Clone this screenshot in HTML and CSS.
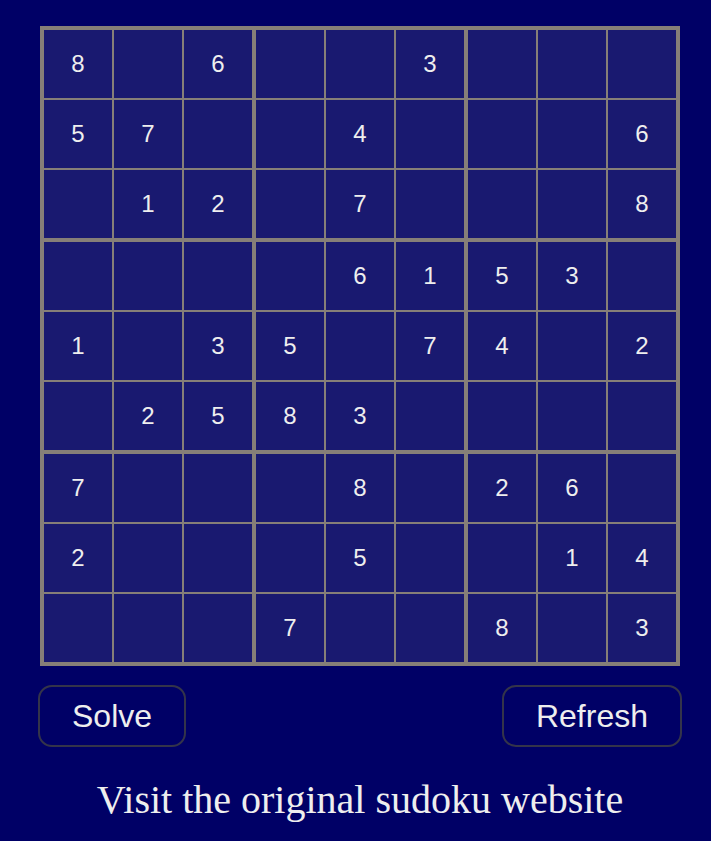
FILE: index.html
```html
<!DOCTYPE html>
<html lang="en">
<head>
<meta charset="utf-8">
<title>Sudoku</title>
<link rel="stylesheet" href="styles.css">
</head>
<body>
<main class="app">
  <div class="board">
    <div class="box"><div class="cell">8</div><div class="cell"></div><div class="cell">6</div><div class="cell">5</div><div class="cell">7</div><div class="cell"></div><div class="cell"></div><div class="cell">1</div><div class="cell">2</div></div>
    <div class="box"><div class="cell"></div><div class="cell"></div><div class="cell">3</div><div class="cell"></div><div class="cell">4</div><div class="cell"></div><div class="cell"></div><div class="cell">7</div><div class="cell"></div></div>
    <div class="box"><div class="cell"></div><div class="cell"></div><div class="cell"></div><div class="cell"></div><div class="cell"></div><div class="cell">6</div><div class="cell"></div><div class="cell"></div><div class="cell">8</div></div>
    <div class="box"><div class="cell"></div><div class="cell"></div><div class="cell"></div><div class="cell">1</div><div class="cell"></div><div class="cell">3</div><div class="cell"></div><div class="cell">2</div><div class="cell">5</div></div>
    <div class="box"><div class="cell"></div><div class="cell">6</div><div class="cell">1</div><div class="cell">5</div><div class="cell"></div><div class="cell">7</div><div class="cell">8</div><div class="cell">3</div><div class="cell"></div></div>
    <div class="box"><div class="cell">5</div><div class="cell">3</div><div class="cell"></div><div class="cell">4</div><div class="cell"></div><div class="cell">2</div><div class="cell"></div><div class="cell"></div><div class="cell"></div></div>
    <div class="box"><div class="cell">7</div><div class="cell"></div><div class="cell"></div><div class="cell">2</div><div class="cell"></div><div class="cell"></div><div class="cell"></div><div class="cell"></div><div class="cell"></div></div>
    <div class="box"><div class="cell"></div><div class="cell">8</div><div class="cell"></div><div class="cell"></div><div class="cell">5</div><div class="cell"></div><div class="cell">7</div><div class="cell"></div><div class="cell"></div></div>
    <div class="box"><div class="cell">2</div><div class="cell">6</div><div class="cell"></div><div class="cell"></div><div class="cell">1</div><div class="cell">4</div><div class="cell">8</div><div class="cell"></div><div class="cell">3</div></div>
  </div>
  <div class="controls">
    <button class="btn" type="button">Solve</button>
    <button class="btn" type="button">Refresh</button>
  </div>
  <p class="footer"><a class="link" href="#">Visit the original sudoku website</a></p>
</main>
</body>
</html>
```
FILE: styles.css
```css
html, body {
  margin: 0;
  padding: 0;
  background: #000066;
}

.app {
  width: 644px;
  padding: 26px 0 0 38px;
}

.board {
  margin: 0 2px;
  width: 640px;
  box-sizing: border-box;
  padding: 4px;
  background: #867f78;
  display: grid;
  grid-template-columns: repeat(3, 208px);
  gap: 4px;
}

.box {
  display: grid;
  grid-template-columns: repeat(3, 68px);
  grid-auto-rows: 68px;
  gap: 2px;
}

.cell {
  background: #191970;
  color: #eeeeee;
  font-family: "Liberation Sans", Arial, sans-serif;
  font-size: 24px;
  line-height: 68px;
  text-align: center;
}

.controls {
  display: flex;
  justify-content: space-between;
  margin-top: 19px;
}

.btn {
  box-sizing: border-box;
  height: 62px;
  padding: 0 32px;
  background: #000066;
  color: #eeeeee;
  border: 2px solid #34344a;
  border-radius: 14px;
  font-family: "Liberation Sans", Arial, sans-serif;
  font-size: 32px;
}

.footer {
  margin: 29px 0 0;
  text-align: center;
  font-family: "Liberation Serif", "Times New Roman", serif;
  font-size: 40px;
}

.link {
  color: #eeeeee;
  text-decoration: none;
}
```
